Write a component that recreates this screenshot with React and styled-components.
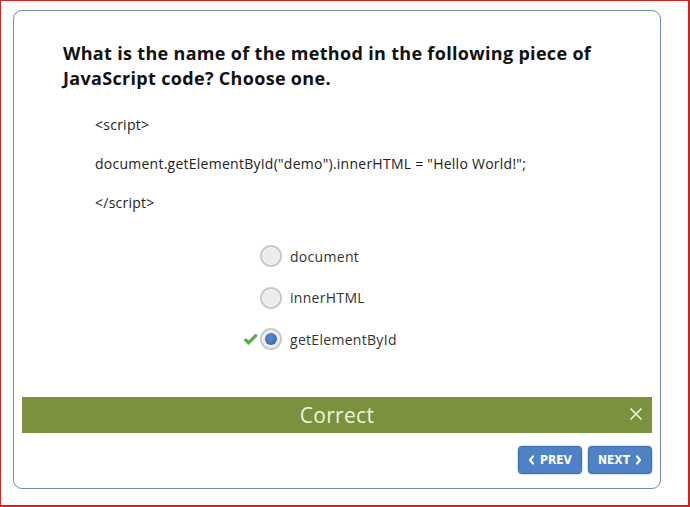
import React, { useState } from 'react';
import styled, { createGlobalStyle } from 'styled-components';

const GlobalStyle = createGlobalStyle`
  html, body {
    margin: 0;
    padding: 0;
    background: #fff;
  }
  * { box-sizing: border-box; }
`;

const Frame = styled.div`
  width: 690px;
  height: 507px;
  border: 1px solid #d8201f;
  border-right-width: 2px;
  border-bottom-width: 2px;
  padding: 9px 0 0 12px;
  background: #fff;
`;

const Card = styled.div`
  width: 648px;
  height: 479px;
  border: 1px solid #6f8db4;
  border-radius: 9px;
  padding: 30px 8px 0 8px;
  display: flex;
  flex-direction: column;
  font-family: "Open Sans", "Liberation Sans", sans-serif;
  color: #222;
`;

const Title = styled.h1`
  margin: 0 0 0 41px;
  font-size: 18px;
  line-height: 25px;
  font-weight: 700;
  color: #111;
  letter-spacing: 0.32px;
`;

const Code = styled.div`
  margin: 24px 0 0 73px;
  display: flex;
  flex-direction: column;
  gap: 19px;
`;

const CodeLine = styled.p`
  margin: 0;
  font-size: 14px;
  line-height: 20px;
  color: #222;
  letter-spacing: 0.25px;
`;

const Options = styled.div`
  margin: 32px 0 0 221px;
  display: flex;
  flex-direction: column;
  gap: 19.5px;
`;

const Option = styled.label`
  display: flex;
  align-items: center;
  height: 22px;
  font-size: 14px;
  color: #333;
  letter-spacing: 0.3px;
  cursor: pointer;
`;

const Mark = styled.span`
  width: 17px;
  height: 14px;
  display: flex;
  align-items: center;
  justify-content: flex-start;
`;

const Radio = styled.span`
  width: 22px;
  height: 22px;
  border-radius: 50%;
  border: 2px solid #c9c9c9;
  background: #ececec;
  display: flex;
  align-items: center;
  justify-content: center;
  margin-right: 8px;
  box-shadow: inset 0 0 0 1px #f7f7f7;

  &::after {
    content: '';
    width: 12px;
    height: 12px;
    border-radius: 50%;
    background: radial-gradient(circle at 45% 40%, #5a8ad0, #2f5fa6);
    display: ${p => (p.$checked ? 'block' : 'none')};
  }
`;

const Feedback = styled.div`
  margin-top: 47px;
  height: 36px;
  background: #7a913d;
  display: flex;
  align-items: center;
  justify-content: center;
  position: relative;
  font-size: 21px;
  color: #eef5d6;
  letter-spacing: 0.3px;
`;

const Close = styled.button`
  position: absolute;
  right: 9px;
  top: 10px;
  width: 14px;
  height: 14px;
  padding: 0;
  border: none;
  background: transparent;
  display: flex;
  cursor: pointer;
`;

const Nav = styled.div`
  margin-top: 13px;
  display: flex;
  justify-content: flex-end;
  gap: 6px;
`;

const NavButton = styled.button`
  width: 64px;
  height: 28px;
  border: 1px solid #3e6ea8;
  border-radius: 4px;
  background: #4f82c4;
  box-shadow: 0 0 2px rgba(60, 100, 160, 0.6);
  color: #fff;
  font-family: "DejaVu Sans Condensed", "DejaVu Sans", sans-serif;
  font-weight: 700;
  font-size: 12px;
  display: flex;
  align-items: center;
  justify-content: center;
  gap: 5px;
  padding: 0;
  cursor: pointer;
`;

function Chevron({ dir }) {
  const pts = dir === 'left' ? '5,1.5 2,5 5,8.5' : '2,1.5 5,5 2,8.5';
  return (
    <svg width="7" height="10" viewBox="0 0 7 10">
      <polyline points={pts} fill="none" stroke="#fff" strokeWidth="2.2" strokeLinecap="round" strokeLinejoin="round" />
    </svg>
  );
}

const choices = ['document', 'innerHTML', 'getElementById'];

export default function App() {
  const [picked] = useState(2);
  return (
    <>
      <GlobalStyle />
      <Frame>
        <Card>
          <Title>
            What is the name of the method in the following piece of
            <br />
            JavaScript code? Choose one.
          </Title>
          <Code>
            <CodeLine>&lt;script&gt;</CodeLine>
            <CodeLine>document.getElementById("demo").innerHTML = "Hello World!";</CodeLine>
            <CodeLine>&lt;/script&gt;</CodeLine>
          </Code>
          <Options>
            {choices.map((c, i) => (
              <Option key={c}>
                <Mark>
                  {i === picked && (
                    <svg width="15" height="13" viewBox="0 0 15 13">
                      <path d="M1 7.2 L3 5.4 L5.6 8 L12.6 1 L14.3 2.8 L5.6 11.6 Z" fill="#5cae3c" stroke="#3f8a27" strokeWidth="0.6" strokeLinejoin="round" />
                    </svg>
                  )}
                </Mark>
                <Radio $checked={i === picked} />
                {c}
              </Option>
            ))}
          </Options>
          <Feedback>
            Correct
            <Close aria-label="close">
              <svg width="14" height="14" viewBox="0 0 14 14">
                <path d="M1.5 1.5 L12.5 12.5 M12.5 1.5 L1.5 12.5" stroke="#f2f6e4" strokeWidth="1.5" />
              </svg>
            </Close>
          </Feedback>
          <Nav>
            <NavButton>
              <Chevron dir="left" />
              PREV
            </NavButton>
            <NavButton>
              NEXT
              <Chevron dir="right" />
            </NavButton>
          </Nav>
        </Card>
      </Frame>
    </>
  );
}
